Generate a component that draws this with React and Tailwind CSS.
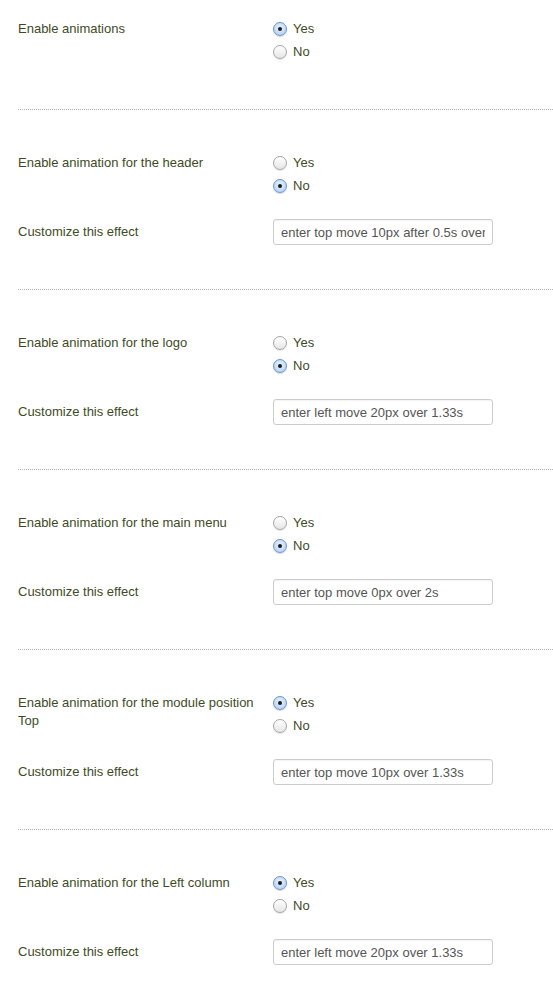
import React from "react";

function Radio({ checked, label }) {
  return (
    <div className="flex h-[23px] items-center">
      {checked ? (
        <span className="flex h-[14px] w-[14px] items-center justify-center rounded-full border border-[#6c95d0] bg-[radial-gradient(circle_at_50%_40%,#eaf3fd_0%,#bcd6f5_70%,#a7c6ee_100%)] shadow-[0_1px_1px_rgba(0,0,0,0.15)]">
          <span className="h-[4px] w-[4px] rounded-full bg-[#1a1a1a]" />
        </span>
      ) : (
        <span className="h-[14px] w-[14px] rounded-full border border-[#a6a6a6] bg-[linear-gradient(#ffffff,#e6e6e6)] shadow-[0_1px_1px_rgba(0,0,0,0.1)]" />
      )}
      <span className="ml-[6px] text-[13px] leading-[18px] text-[#3e4b1f]">{label}</span>
    </div>
  );
}

function Row({ label, children }) {
  return (
    <div className="flex">
      <div className="w-[245px] shrink-0 pt-[3px] text-[13px] leading-[18px] text-[#3e4b1f]">{label}</div>
      <div className="ml-[10px]">{children}</div>
    </div>
  );
}

function RadioRow({ label, yes }) {
  return (
    <Row label={label}>
      <Radio checked={yes} label="Yes" />
      <Radio checked={!yes} label="No" />
    </Row>
  );
}

function EffectRow({ value }) {
  return (
    <div className="mt-[22px] flex items-center">
      <div className="w-[245px] shrink-0 text-[13px] leading-[18px] text-[#3e4b1f]">Customize this effect</div>
      <input
        readOnly
        value={value}
        className="ml-[10px] h-[26px] w-[220px] rounded-[3px] border border-[#cccccc] bg-white px-[7px] text-[13px] text-[#555555] shadow-[inset_0_1px_1px_rgba(0,0,0,0.05)] outline-none"
        style={{ fontFamily: '"Liberation Sans", Arial, sans-serif' }}
      />
    </div>
  );
}

function Divider() {
  return <div className="border-t border-dotted border-[#b3b3b3]" />;
}

function Section({ label, yes, value }) {
  return (
    <div className="pt-[41px] pb-[44px]">
      <RadioRow label={label} yes={yes} />
      <EffectRow value={value} />
    </div>
  );
}

export default function App() {
  return (
    <div
      className="min-h-[1000px] bg-white pl-[18px]"
      style={{ fontFamily: '"Liberation Sans", Arial, Helvetica, sans-serif' }}
    >
      <div className="pt-[17px] pb-[46px]">
        <RadioRow label="Enable animations" yes={true} />
      </div>
      <Divider />
      <Section label="Enable animation for the header" yes={false} value="enter top move 10px after 0.5s over 1.33s" />
      <Divider />
      <Section label="Enable animation for the logo" yes={false} value="enter left move 20px over 1.33s" />
      <Divider />
      <Section label="Enable animation for the main menu" yes={false} value="enter top move 0px over 2s" />
      <Divider />
      <Section label="Enable animation for the module position Top" yes={true} value="enter top move 10px over 1.33s" />
      <Divider />
      <Section label="Enable animation for the Left column" yes={true} value="enter left move 20px over 1.33s" />
    </div>
  );
}
